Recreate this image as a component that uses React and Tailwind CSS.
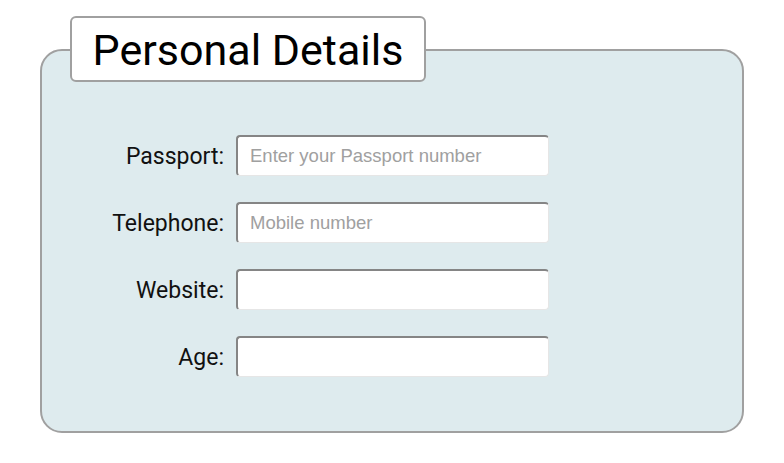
import React from 'react'

const fields = [
  { label: 'Passport:', placeholder: 'Enter your Passport number' },
  { label: 'Telephone:', placeholder: 'Mobile number' },
  { label: 'Website:', placeholder: '' },
  { label: 'Age:', placeholder: '' },
]

export default function App() {
  return (
    <div className="w-[784px] h-[463px] bg-white pt-[16px] pl-[40px]">
      <div className="relative z-10 ml-[30px] w-[356px] h-[66px] bg-white border-2 border-[#a0a0a0] rounded-[6px] flex items-center justify-center">
        <span className="text-[43px] leading-none text-black pt-[2px]" style={{ fontFamily: 'Roboto, sans-serif' }}>
          Personal Details
        </span>
      </div>
      <div className="-mt-[33px] w-[704px] h-[384px] bg-[#deebee] border-2 border-[#a0a0a0] rounded-[22px] pt-[84px]">
        <div className="flex flex-col gap-[26px]">
          {fields.map((f) => (
            <div key={f.label} className="flex items-center gap-[12px]">
              <label
                className="w-[182px] text-right text-[23px] text-[#111] pt-[3px]"
                style={{ fontFamily: 'Roboto, sans-serif' }}
              >
                {f.label}
              </label>
              <input
                type="text"
                placeholder={f.placeholder}
                className="w-[313px] h-[41px] bg-white rounded-[4px] border-t-2 border-l-2 border-b border-r border-t-[#858585] border-l-[#858585] border-b-[#e6e6e6] border-r-[#e6e6e6] px-[12px] text-[18.5px] placeholder:text-[#a0a0a0] outline-none"
                style={{ fontFamily: '"Liberation Sans", Arial, sans-serif' }}
              />
            </div>
          ))}
        </div>
      </div>
    </div>
  )
}
